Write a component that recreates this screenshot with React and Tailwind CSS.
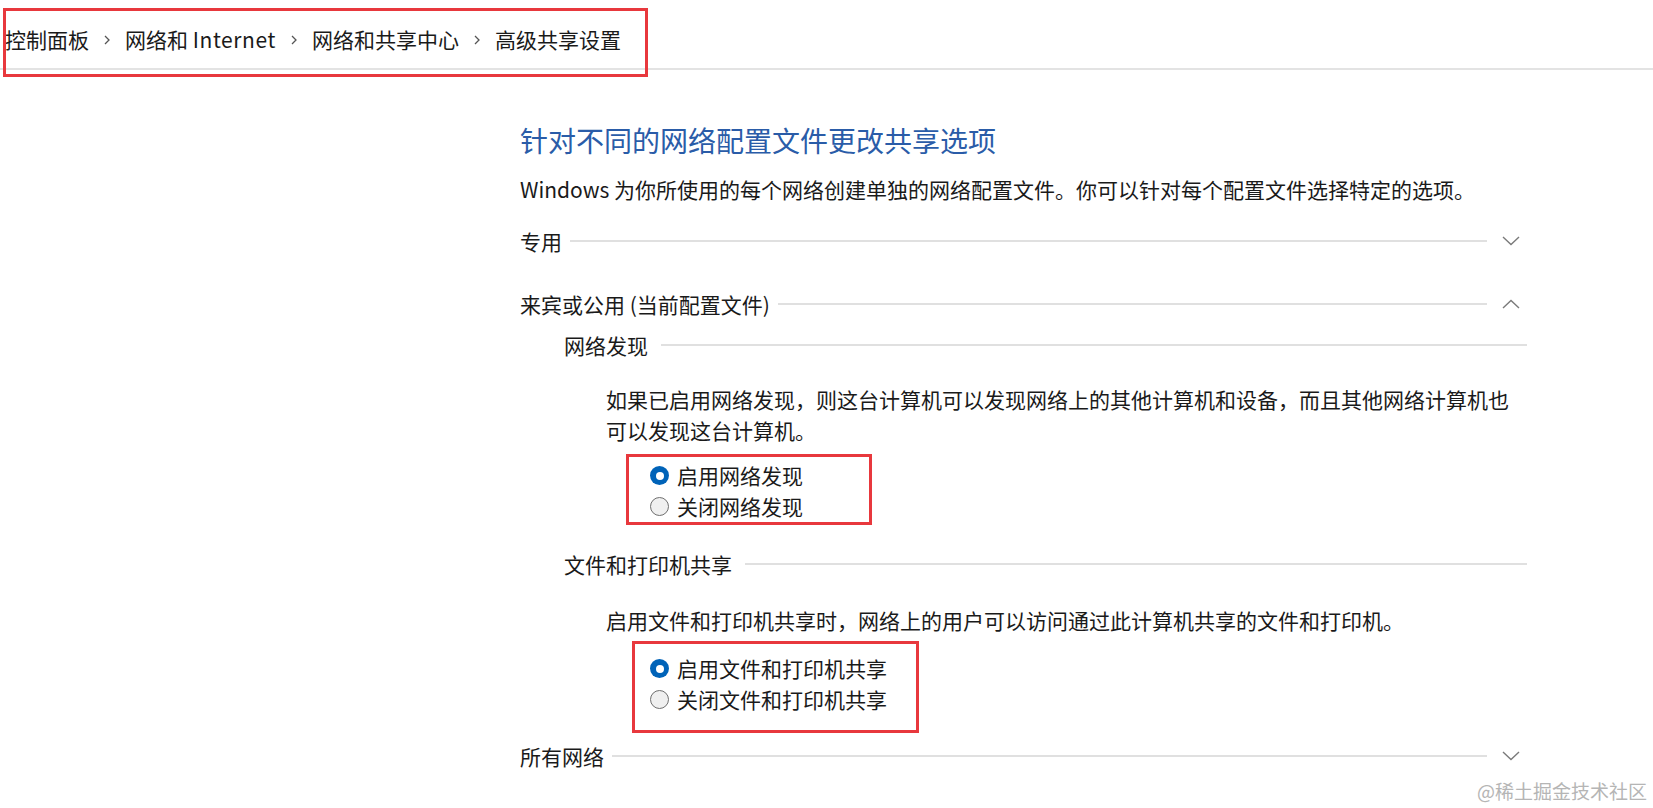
import React from 'react';

const FONT = '"Noto Sans CJK SC", "Noto Sans", sans-serif';

const Chevron = ({ up }) => (
  <svg width="18" height="10" viewBox="0 0 18 10" className="shrink-0">
    <path
      d={up ? 'M1 9 L9 1.5 L17 9' : 'M1 1 L9 8.5 L17 1'}
      fill="none"
      stroke="#7a7a7a"
      strokeWidth="1.4"
    />
  </svg>
);

const Crumb = () => (
  <svg width="6" height="10" viewBox="0 0 6 10" className="mx-[15px] shrink-0">
    <path d="M1 1 L5 5 L1 9" fill="none" stroke="#555" strokeWidth="1.3" />
  </svg>
);

const Radio = ({ checked, label }) => (
  <div className="flex items-center h-[31px] gap-[8px]">
    {checked ? (
      <span className="w-[19px] h-[19px] rounded-full bg-[#0063b8] flex items-center justify-center shrink-0">
        <span className="w-[8px] h-[8px] rounded-full bg-white" />
      </span>
    ) : (
      <span className="w-[19px] h-[19px] rounded-full border border-[#6f6f6f] bg-[#f0f0f0] shrink-0" />
    )}
    <span>{label}</span>
  </div>
);

const Section = ({ label, up }) => (
  <div className="flex items-center h-[30px]">
    <span className="whitespace-nowrap">{label}</span>
    <div className="flex-1 h-[2px] bg-[#e0e0e0] ml-[8px]" />
    <div className="ml-[15px] mr-[7px] flex items-center">
      <Chevron up={up} />
    </div>
  </div>
);

const SubSection = ({ label }) => (
  <div className="flex items-center h-[30px] pl-[44px]">
    <span className="whitespace-nowrap">{label}</span>
    <div className="flex-1 h-[2px] bg-[#e0e0e0] ml-[13px]" />
  </div>
);

export default function App() {
  return (
    <div
      className="relative w-[1653px] h-[808px] bg-white text-[#1a1a1a] text-[21px] leading-none overflow-hidden"
      style={{ fontFamily: FONT }}
    >
      {/* breadcrumb */}
      <div className="h-[70px] border-b-2 border-[#e3e3e3] flex items-center pt-[11px] pl-[5px]">
        <span>控制面板</span>
        <Crumb />
        <span>
          网络和 <span className="tracking-[0.6px]">Internet</span>
        </span>
        <Crumb />
        <span>网络和共享中心</span>
        <Crumb />
        <span>高级共享设置</span>
      </div>
      <div className="absolute left-[3px] top-[8px] w-[645px] h-[69px] border-[3px] border-[#e8383d]" />

      <div className="ml-[520px] w-[1007px]">
        <div className="mt-[50px] h-[40px] flex items-center text-[28px] text-[#2a5ca8]">
          针对不同的网络配置文件更改共享选项
        </div>
        <div className="mt-[14px] h-[30px] flex items-center whitespace-nowrap">
          Windows 为你所使用的每个网络创建单独的网络配置文件。你可以针对每个配置文件选择特定的选项。
        </div>

        <div className="mt-[22px]">
          <Section label="专用" />
        </div>
        <div className="mt-[33px]">
          <Section label="来宾或公用 (当前配置文件)" up />
        </div>

        <div className="mt-[11px]">
          <SubSection label="网络发现" />
        </div>
        <div className="mt-[24px] pl-[86px] leading-[31px]">
          如果已启用网络发现，则这台计算机可以发现网络上的其他计算机和设备，而且其他网络计算机也
          <br />
          可以发现这台计算机。
        </div>
        <div className="mt-[8px] ml-[106px] w-[246px] h-[71px] border-[3px] border-[#e8383d] pt-[3px] pl-[21px]">
          <Radio checked label="启用网络发现" />
          <Radio label="关闭网络发现" />
        </div>

        <div className="mt-[24px]">
          <SubSection label="文件和打印机共享" />
        </div>
        <div className="mt-[26px] pl-[86px] leading-[31px] whitespace-nowrap">
          启用文件和打印机共享时，网络上的用户可以访问通过此计算机共享的文件和打印机。
        </div>
        <div className="mt-[5px] ml-[112px] w-[287px] h-[92px] border-[3px] border-[#e8383d] pt-[9px] pl-[15px]">
          <Radio checked label="启用文件和打印机共享" />
          <Radio label="关闭文件和打印机共享" />
        </div>

        <div className="mt-[8px]">
          <Section label="所有网络" />
        </div>
      </div>

      <div className="absolute right-[6px] bottom-[8px] text-[19px] text-[#b5b5b5]">
        @稀土掘金技术社区
      </div>
    </div>
  );
}
